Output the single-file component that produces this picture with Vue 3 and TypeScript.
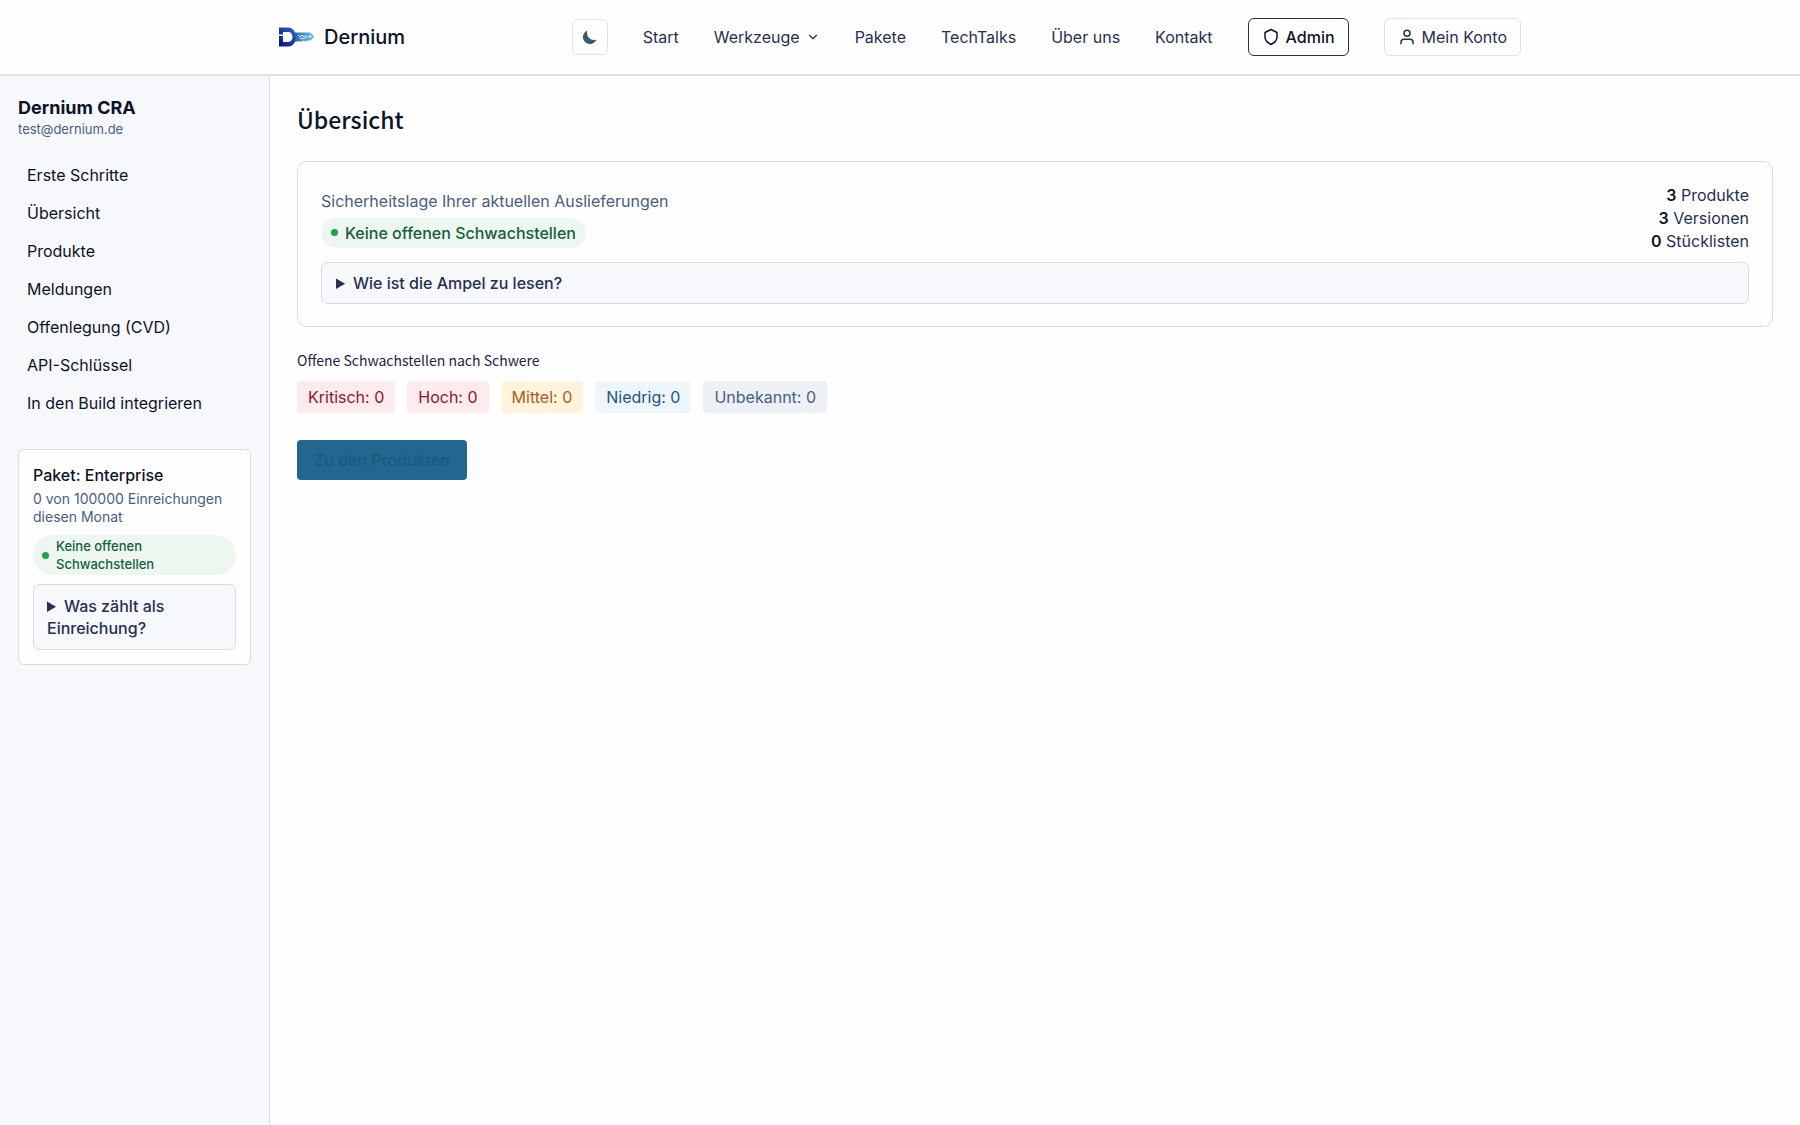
<script setup lang="ts">
interface LinkItem {
  label: string
  href: string
}

interface Severity {
  label: string
  count: number
  tone: string
}

const sideLinks: LinkItem[] = [
  { label: 'Erste Schritte', href: '#erste-schritte' },
  { label: 'Übersicht', href: '#uebersicht' },
  { label: 'Produkte', href: '#produkte' },
  { label: 'Meldungen', href: '#meldungen' },
  { label: 'Offenlegung (CVD)', href: '#offenlegung' },
  { label: 'API-Schlüssel', href: '#api' },
  { label: 'In den Build integrieren', href: '#build' },
]

const topLinks: LinkItem[] = [
  { label: 'Pakete', href: '#pakete' },
  { label: 'TechTalks', href: '#techtalks' },
  { label: 'Über uns', href: '#ueber-uns' },
  { label: 'Kontakt', href: '#kontakt' },
]

const severities: Severity[] = [
  { label: 'Kritisch', count: 0, tone: 'red' },
  { label: 'Hoch', count: 0, tone: 'red' },
  { label: 'Mittel', count: 0, tone: 'amber' },
  { label: 'Niedrig', count: 0, tone: 'blue' },
  { label: 'Unbekannt', count: 0, tone: 'grey' },
]

const stats = [
  { count: 3, label: 'Produkte' },
  { count: 3, label: 'Versionen' },
  { count: 0, label: 'Stücklisten' },
]
</script>

<template>
  <div class="page">
    <header class="topbar">
      <div class="topbar-inner">
        <a class="brand" href="#start">
          <svg class="logo" viewBox="0 0 36 20" aria-hidden="true">
            <defs>
              <linearGradient id="d-fill" x1="0" y1="1" x2="1" y2="0">
                <stop offset="0" stop-color="#0b0c8c" />
                <stop offset="1" stop-color="#2a6cb8" />
              </linearGradient>
              <linearGradient id="key-fill" x1="0" y1="0" x2="1" y2="0">
                <stop offset="0" stop-color="#2463b4" />
                <stop offset="1" stop-color="#6cc4f2" />
              </linearGradient>
            </defs>
            <path fill="url(#key-fill)" d="M15 5.500h16l4.500 4-4 4h-3.500l-1.500 1-2-1-2 1h-8z" />
            <path fill="none" stroke="#e9f5ff" stroke-width="1" d="M19 8l2 2 2-2 2 2 2-2M21 12l2-1 2 1 2-2h2" />
            <circle cx="31" cy="9.500" r="1.200" fill="#e9f5ff" />
            <path
              fill="url(#d-fill)"
              d="M0 .5h9.500a7.500 9.500 0 0 1 0 19H0V9h4v6h5.500a4 5 0 0 0 0-10H4v2.500H0z"
            />
          </svg>
          <span>Dernium</span>
        </a>
        <nav class="topnav" aria-label="Hauptnavigation">
          <button class="theme" type="button" aria-label="Dunkles Design">
            <svg viewBox="0 0 16 16" aria-hidden="true">
              <path fill="#3b5876" d="M5.500 1.500A7 7 0 1 0 14.500 10.500 7 7 0 0 1 5.500 1.500z" />
            </svg>
          </button>
          <a href="#start">Start</a>
          <button class="menu" type="button">
            Werkzeuge
            <svg viewBox="0 0 24 24" aria-hidden="true"><path d="M6 9l6 6 6-6" /></svg>
          </button>
          <a v-for="link in topLinks" :key="link.label" :href="link.href">{{ link.label }}</a>
          <a class="boxed admin" href="#admin">
            <svg viewBox="0 0 24 24" aria-hidden="true">
              <path d="M12 22s8-4 8-10V6l-8-4-8 4v6c0 6 8 10 8 10z" />
            </svg>
            Admin
          </a>
          <a class="boxed" href="#konto">
            <svg viewBox="0 0 24 24" aria-hidden="true">
              <circle cx="12" cy="7" r="4" />
              <path d="M20 21v-2a4 4 0 0 0-4-4H8a4 4 0 0 0-4 4v2" />
            </svg>
            Mein Konto
          </a>
        </nav>
      </div>
    </header>

    <div class="body">
      <aside class="sidebar">
        <div class="account">
          <strong>Dernium CRA</strong>
          <span>test@dernium.de</span>
        </div>
        <nav class="sidenav" aria-label="Bereich">
          <a v-for="link in sideLinks" :key="link.label" :href="link.href">{{ link.label }}</a>
        </nav>
        <section class="plan">
          <h2>Paket: Enterprise</h2>
          <p>0 von 100000 Einreichungen diesen Monat</p>
          <div class="pill small"><i class="dot"></i><span>Keine offenen Schwachstellen</span></div>
          <details class="hint">
            <summary>Was zählt als Einreichung?</summary>
          </details>
        </section>
      </aside>

      <main class="content">
        <h1>Übersicht</h1>
        <section class="card">
          <div class="card-row">
            <div class="status">
              <p>Sicherheitslage Ihrer aktuellen Auslieferungen</p>
              <div class="pill"><i class="dot"></i><span>Keine offenen Schwachstellen</span></div>
            </div>
            <ul class="stats">
              <li v-for="stat in stats" :key="stat.label"><b>{{ stat.count }}</b> {{ stat.label }}</li>
            </ul>
          </div>
          <details class="hint">
            <summary>Wie ist die Ampel zu lesen?</summary>
          </details>
        </section>
        <h2 class="subtitle">Offene Schwachstellen nach Schwere</h2>
        <ul class="severities">
          <li v-for="s in severities" :key="s.label" :class="s.tone">{{ s.label }}: {{ s.count }}</li>
        </ul>
        <a class="cta" href="#produkte">Zu den Produkten</a>
      </main>
    </div>
  </div>
</template>

<style>
body {
  margin: 0;
  background: #fefefe;
}
</style>

<style scoped>
* {
  box-sizing: border-box;
}

.page {
  display: flex;
  flex-direction: column;
  min-height: 100vh;
  font-family: Inter, sans-serif;
  font-size: 16px;
  line-height: 22px;
  color: #27304f;
}

h1,
h2,
p,
ul {
  margin: 0;
  padding: 0;
  list-style: none;
}

a {
  color: inherit;
  text-decoration: none;
}

button {
  font: inherit;
  color: inherit;
  background: none;
  border: 0;
  padding: 0;
}

.topbar {
  border-bottom: 2px solid #e1e3e6;
}

.topbar-inner {
  display: flex;
  align-items: center;
  justify-content: space-between;
  max-width: 1296px;
  height: 74px;
  margin: 0 auto;
  padding: 0 27px;
}

.brand {
  display: flex;
  align-items: center;
  gap: 9px;
  font-size: 20px;
  font-weight: 500;
  color: #0d1326;
}

.logo {
  width: 36px;
  height: 20px;
}

.topnav {
  display: flex;
  align-items: center;
  gap: 35px;
}

.theme {
  display: flex;
  align-items: center;
  justify-content: center;
  width: 36px;
  height: 36px;
  border: 1px solid #dfe3e9;
  border-radius: 6px;
}

.theme svg {
  width: 16px;
  height: 16px;
}

.menu {
  display: flex;
  align-items: center;
  gap: 6px;
}

.menu svg {
  width: 14px;
  height: 14px;
}

.menu svg,
.boxed svg {
  fill: none;
  stroke: currentColor;
  stroke-width: 2;
  stroke-linecap: round;
  stroke-linejoin: round;
}

.boxed {
  display: flex;
  align-items: center;
  gap: 6px;
  height: 38px;
  padding: 0 13px;
  border: 1px solid #dfe3e9;
  border-radius: 6px;
}

.boxed svg {
  width: 18px;
  height: 18px;
}

.admin {
  border-color: #27304f;
  color: #0d1326;
  font-weight: 500;
}

.body {
  display: flex;
  flex: 1;
}

.sidebar {
  flex: none;
  width: 270px;
  padding: 20px 18px;
  background: #f6f8fc;
  border-right: 1px solid #d8dce2;
}

.account {
  display: flex;
  flex-direction: column;
  color: #0d1326;
}

.account strong {
  font-size: 18px;
  font-weight: 700;
  line-height: 24px;
}

.account span {
  font-size: 13px;
  line-height: 18px;
  color: #48607e;
}

.sidenav {
  display: flex;
  flex-direction: column;
  gap: 2px;
  margin-top: 19px;
  color: #0d1326;
}

.sidenav a {
  padding: 7px 9px;
}

.plan {
  margin-top: 28px;
  padding: 14px;
  background: #fefefe;
  border: 1px solid #d8dce2;
  border-radius: 6px;
}

.plan h2 {
  font-size: 16px;
  font-weight: 500;
  line-height: 22px;
  color: #0d1326;
}

.plan p {
  margin: 4px 0 9px;
  font-size: 14px;
  line-height: 18px;
  color: #48607e;
}

.pill {
  display: flex;
  align-items: center;
  gap: 7px;
  padding: 4px 10px;
  border-radius: 99px;
  background: #edf7ef;
  color: #14603a;
  font-weight: 500;
}

.dot {
  flex: none;
  width: 7px;
  height: 7px;
  border-radius: 50%;
  background: #1fa04c;
}

.small {
  padding: 2px 9px;
  font-size: 13px;
  line-height: 18px;
}

.hint {
  margin-top: 9px;
  padding: 9px 14px;
  background: #f6f8fc;
  border: 1px solid #d8dce2;
  border-radius: 6px;
  font-weight: 500;
}

.plan .hint {
  padding: 10px 13px;
}

.content {
  flex: 1;
  min-width: 0;
  padding: 27px;
}

h1 {
  font-family: "Noto Sans CJK SC", sans-serif;
  font-size: 23px;
  font-weight: 500;
  line-height: 32px;
  color: #0d1326;
}

.card {
  margin-top: 26px;
  padding: 22px 23px;
  border: 1px solid #d8dce2;
  border-radius: 9px;
}

.card-row {
  display: flex;
  align-items: center;
  justify-content: space-between;
}

.status {
  display: flex;
  flex-direction: column;
  align-items: flex-start;
  gap: 6px;
  color: #48607e;
}

.stats {
  line-height: 23px;
  text-align: right;
}

.stats b {
  font-weight: 600;
  color: #0d1326;
}

.subtitle {
  margin-top: 22px;
  font-family: "Noto Sans CJK SC", sans-serif;
  font-size: 14px;
  font-weight: 400;
  line-height: 22px;
  color: #1b2444;
}

.severities {
  display: flex;
  flex-wrap: wrap;
  gap: 12px;
  margin-top: 10px;
}

.severities li {
  padding: 5px 11px;
  border-radius: 4px;
}

.red {
  background: #fdebed;
  color: #8a1830;
}

.amber {
  background: #fff3dc;
  color: #a85e27;
}

.blue {
  background: #edf7fb;
  color: #1c567d;
}

.grey {
  background: #edf0f5;
  color: #48607e;
}

.cta {
  display: inline-block;
  margin-top: 27px;
  padding: 9px 17px;
  border-radius: 4px;
  background: #21678f;
  color: #1b5a80;
  font-weight: 500;
}
</style>
